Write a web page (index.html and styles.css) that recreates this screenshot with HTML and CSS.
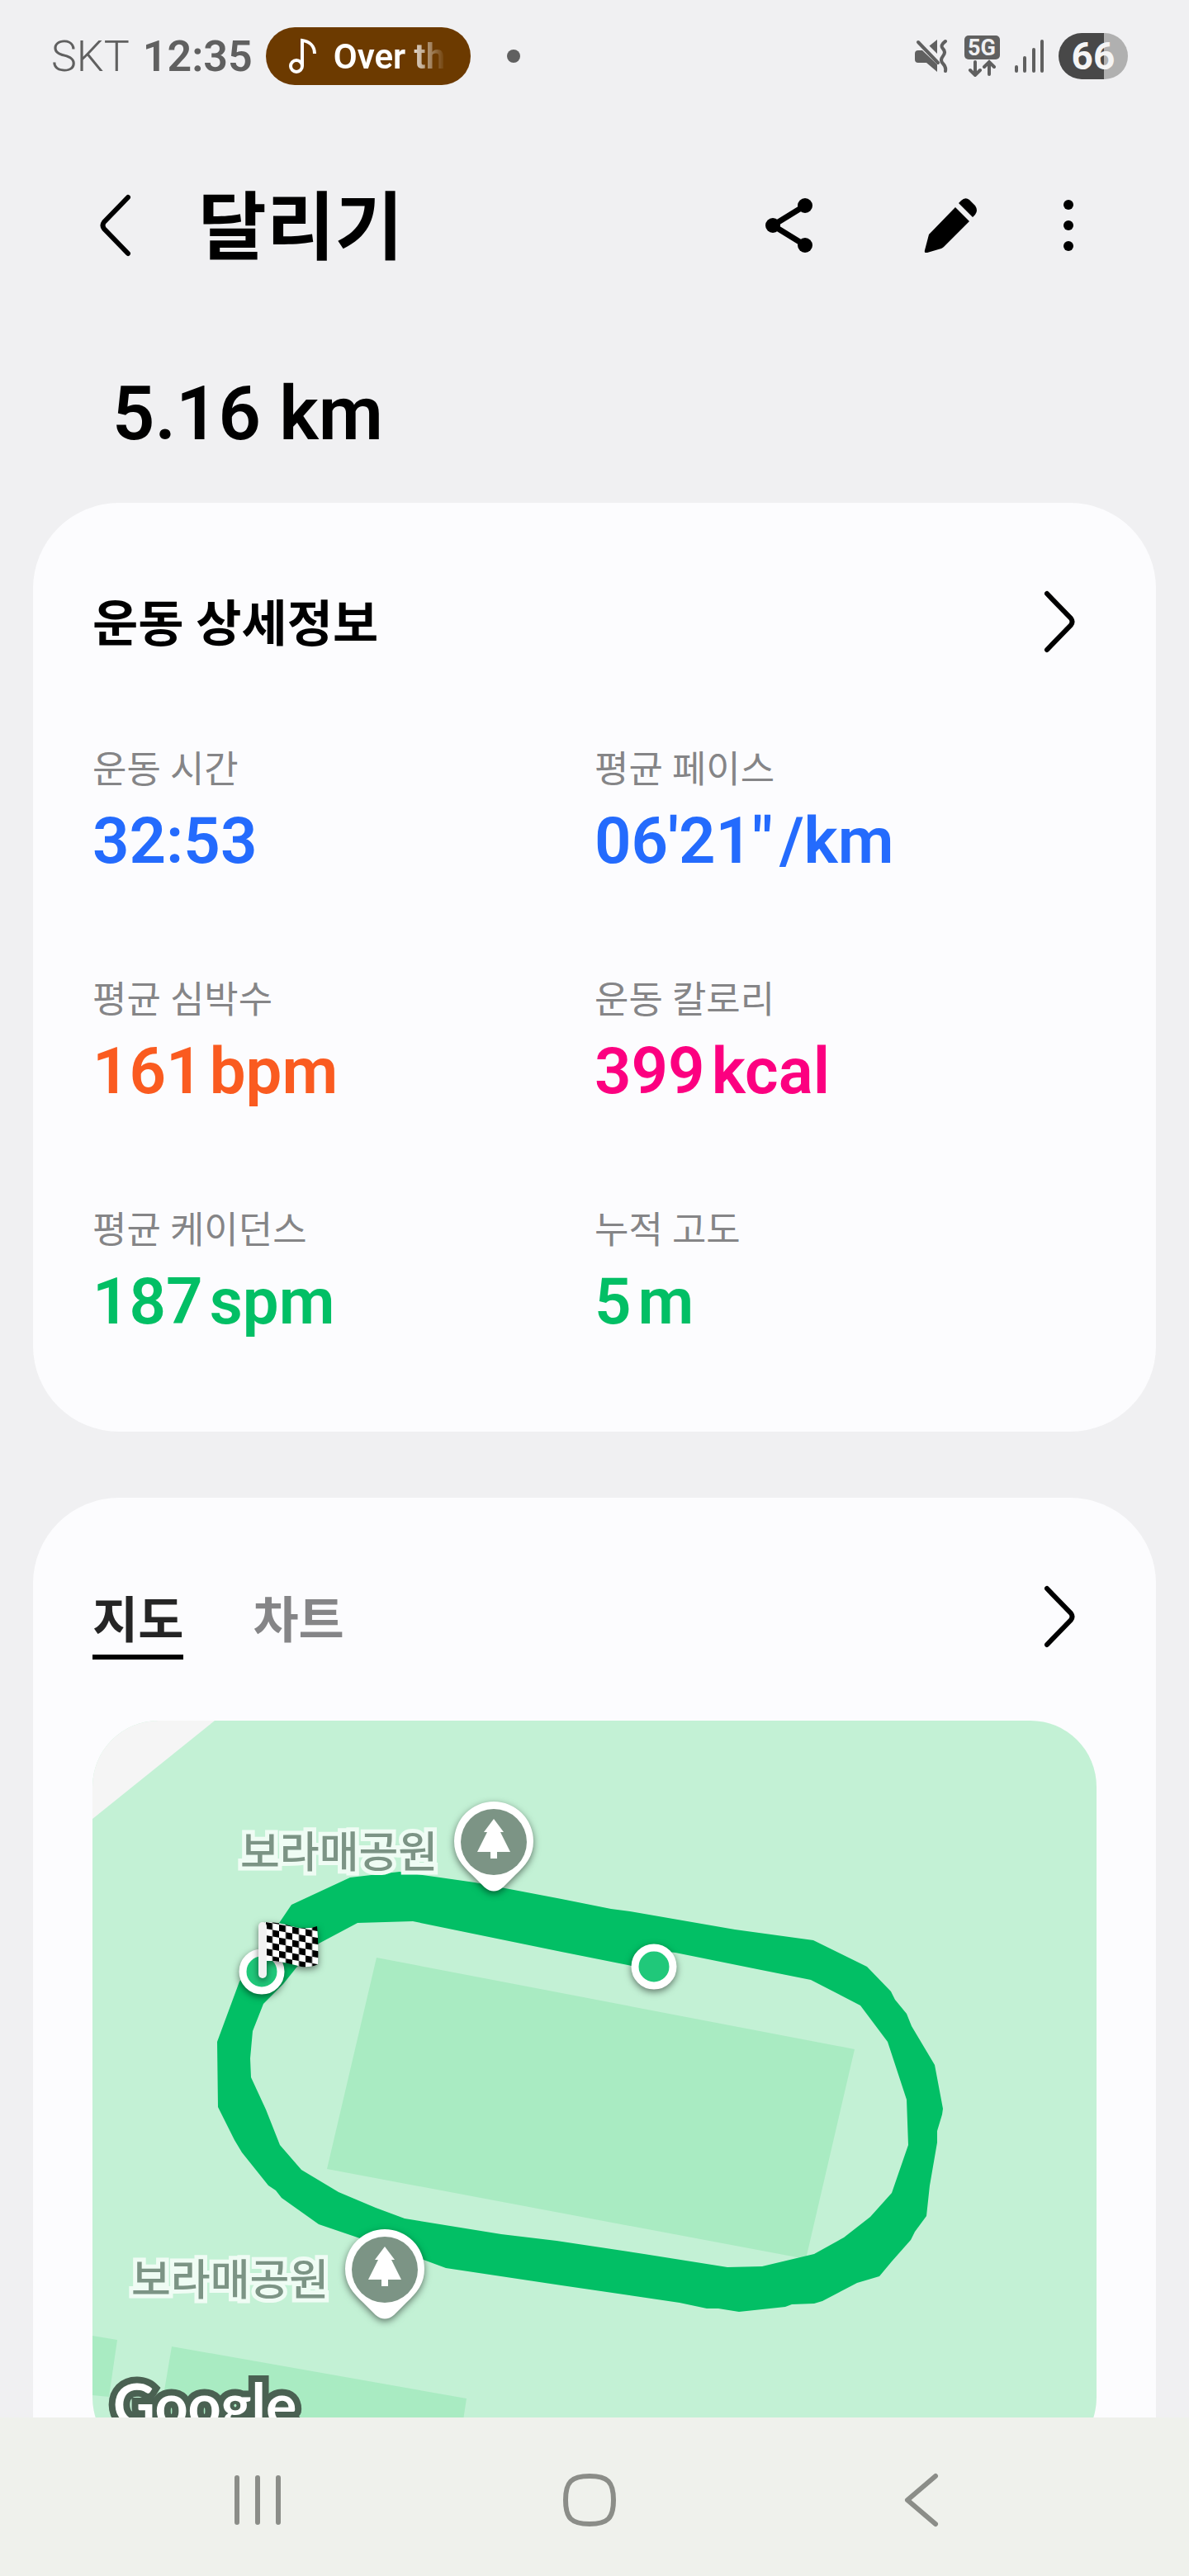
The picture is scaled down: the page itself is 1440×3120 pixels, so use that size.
FILE: index.html
```html
<!DOCTYPE html>
<html lang="ko">

    <head>
        <meta charset="UTF-8">
        <meta name="viewport" content="width=device-width, initial-scale=1.0">
        <title>달리기</title>
        <link rel="stylesheet" href="styles.css">
    </head>

    <body>
        <div class="status-bar">
            <div class="status-left">
                <span class="carrier">SKT</span>
                <span class="clock">12:35</span>
                <button type="button" class="now-playing">
                    <svg class="note-icon" viewBox="0 0 34 44" aria-hidden="true">
                        <circle cx="9" cy="34" r="7" />
                        <path d="M16 34V3c8 1 15 6 15 16" />
                    </svg>
                    <span class="song">Over th</span>
                </button>
                <span class="status-dot"></span>
            </div>
            <div class="status-right">
                <svg class="mute-icon" viewBox="0 0 40 42" aria-hidden="true">
                    <path class="fill" d="M4 14h5l18 17v9L14 29H4q-4 0-4-4v-7q0-4 4-4zM17 9l10-8v20z" />
                    <path class="cut" d="M8 2l24 24" />
                    <path class="line" d="M4 4l24 25" />
                    <path class="line" d="M37 3q-7 5-3 9t0 9 0 9 3 9" />
                </svg>
                <svg class="network-icon" viewBox="0 0 44 50" aria-hidden="true">
                    <rect class="fill" width="43" height="29" rx="5" />
                    <text x="21" y="24">5G</text>
                    <path class="line" d="M13 32v15M7 42l6 6 6-6M30 47V33M24 38l6-6 6 6" />
                </svg>
                <svg class="signal-icon" viewBox="0 0 38 42" aria-hidden="true">
                    <path class="line" d="M3 34v5M13 23v16M24 13v26M34 3v36" />
                </svg>
                <span class="battery">66</span>
            </div>
        </div>

        <header class="app-bar">
            <button type="button" class="icon-button" aria-label="뒤로">
                <svg class="chevron" viewBox="0 0 40 76" aria-hidden="true">
                    <path d="M35 4L6 34q-3 4 0 8L35 72" />
                </svg>
            </button>
            <h1>달리기</h1>
            <div class="actions">
                <button type="button" class="icon-button" aria-label="공유">
                    <svg class="share-icon" viewBox="0 0 60 68" aria-hidden="true">
                        <path d="M49 10L10 34l39 24" />
                        <circle cx="49" cy="10" r="9" />
                        <circle cx="10" cy="34" r="9" />
                        <circle cx="49" cy="58" r="9" />
                    </svg>
                </button>
                <button type="button" class="icon-button" aria-label="편집">
                    <svg class="edit-icon" viewBox="0 0 66 66" aria-hidden="true">
                        <path d="M38 11L55 28 24 59q-1 1-3 2L4 66q-4 1-3-3L6 44zM42 6l3-3q5-5 10-1l7 7q4 6 0 11l-3 3z" />
                    </svg>
                </button>
                <button type="button" class="icon-button menu-button" aria-label="더보기">
                    <svg class="menu-icon" viewBox="0 0 12 64" aria-hidden="true">
                        <circle cx="6" cy="7" r="6" />
                        <circle cx="6" cy="32" r="6" />
                        <circle cx="6" cy="57" r="6" />
                    </svg>
                </button>
            </div>
        </header>

        <main>
            <p class="distance">5.16 km</p>

            <section class="card">
                <div class="card-head">
                    <h2>운동 상세정보</h2>
                    <button type="button" class="icon-button" aria-label="운동 상세정보 열기">
                        <svg class="chevron" viewBox="0 0 40 76" aria-hidden="true">
                            <path d="M4 4l29 30q3 4 0 8L4 72" />
                        </svg>
                    </button>
                </div>
                <dl class="stats">
                    <div class="stat blue">
                        <dt>운동 시간</dt>
                        <dd>32:53</dd>
                    </div>
                    <div class="stat blue">
                        <dt>평균 페이스</dt>
                        <dd>06'21"<span class="unit">/km</span></dd>
                    </div>
                    <div class="stat orange">
                        <dt>평균 심박수</dt>
                        <dd>161<span class="unit">bpm</span></dd>
                    </div>
                    <div class="stat pink">
                        <dt>운동 칼로리</dt>
                        <dd>399<span class="unit">kcal</span></dd>
                    </div>
                    <div class="stat green">
                        <dt>평균 케이던스</dt>
                        <dd>187<span class="unit">spm</span></dd>
                    </div>
                    <div class="stat green">
                        <dt>누적 고도</dt>
                        <dd>5<span class="unit">m</span></dd>
                    </div>
                </dl>
            </section>

            <section class="card">
                <div class="card-head">
                    <div class="tabs" role="tablist">
                        <button type="button" class="tab active" role="tab" aria-selected="true">지도</button>
                        <button type="button" class="tab" role="tab" aria-selected="false">차트</button>
                    </div>
                    <button type="button" class="icon-button" aria-label="지도 열기">
                        <svg class="chevron" viewBox="0 0 40 76" aria-hidden="true">
                            <path d="M4 4l29 30q3 4 0 8L4 72" />
                        </svg>
                    </button>
                </div>
                <svg class="map" viewBox="112 2084 1216 900" role="img" aria-label="달리기 경로 지도">
                    <defs>
                        <pattern id="checker" width="16" height="16" patternUnits="userSpaceOnUse" patternTransform="translate(322 2328) skewY(10)">
                            <rect width="16" height="16" fill="#fff" />
                            <path d="M0 0h8v8H0zM8 8h8v8H8z" />
                        </pattern>
                        <g id="park-pin">
                            <path fill="#fff" d="M0-49a48 48 0 0 1 48 48c0 18-9 29-22 41L11 55q-11 9-22 0l-15-15C-39 28-48 17-48-1A48 48 0 0 1 0-49z" />
                            <circle r="40" fill="#7c9485" />
                            <path fill="#fff" d="M0-28l12 16H8l12 24H4v8h-8v-8h-16L-8-12h-4z" />
                        </g>
                    </defs>

                    <!-- ground -->
                    <rect x="112" y="2084" width="1216" height="900" fill="#c3f1d5" />
                    <path fill="#f5f5f5" d="M112 2084h148L112 2203z" />
                    <path fill="#a9ebc2" d="M456 2371l579 111-59 254-580-109zM112 2829l30 5-10 69-20-2zM208 2842l357 63-12 79H184z" />

                    <!-- route -->
                    <path fill="#02bf65" fill-rule="evenodd" d="M263 2473L290 2400 353 2307 424 2274 484 2267 526 2273 575 2280 680 2300 740 2312 763 2315 890 2337 985 2350 1050 2382 1079 2412 1084 2422 1098 2439 1104 2454 1132 2501 1142 2554 1141 2561 1135 2581 1135 2595 1126 2647 1122 2684 1108 2703 1103 2713 1080 2739 1065 2757 1038 2765 996 2787 986 2790 959 2791 951 2794 895 2800 870 2796 856 2796 823 2789 680 2768 540 2747 513 2737 433 2710 386 2694 341 2662 334 2653 325 2647 293 2607 284 2592 264 2552z
                        M319 2427L306 2460 303 2493 304 2516 322 2555 339 2598 365 2628 410 2655 455 2674 490 2687 607 2706 674 2714 780 2730 881 2746 923 2745 986 2730 1022 2710 1054 2685 1080 2656 1100 2598 1098 2543 1075 2473 1042 2429 982 2398 917 2385 818 2365 790 2362 780 2384 680 2364 500 2327 433 2329 386 2354 359 2383 343 2403z" />

                    <g class="stop">
                        <circle cx="792" cy="2382" r="23" />
                        <circle cx="317" cy="2388" r="23" />
                    </g>
                    <g class="flag">
                        <path fill="url(#checker)" d="M321 2328q16 0 32 5 18 5 31 0 2 24 1 46-8 4-20 3-18-5-32-7h-12z" />
                        <path class="pole" d="M318 2333v58" />
                    </g>

                    <use class="pin" href="#park-pin" x="598" y="2231" />
                    <use class="pin" href="#park-pin" x="466" y="2749" />
                    <text class="place" x="291" y="2262">보라매공원</text>
                    <text class="place" x="159" y="2780">보라매공원</text>
                    <text class="provider" x="137" y="2938">Google</text>
                </svg>
            </section>
        </main>

        <nav class="nav-bar">
            <button type="button" class="nav-button" aria-label="최근 앱">
                <svg viewBox="0 0 68 68" aria-hidden="true">
                    <path d="M9 7v54M34 7v54M59 7v54" />
                </svg>
            </button>
            <button type="button" class="nav-button" aria-label="홈">
                <svg viewBox="0 0 68 68" aria-hidden="true">
                    <path d="M34 5c22 0 29 7 29 29s-7 29-29 29S5 56 5 34 12 5 34 5z" />
                </svg>
            </button>
            <button type="button" class="nav-button" aria-label="이전">
                <svg viewBox="0 0 68 68" aria-hidden="true">
                    <path d="M51 5L17 34l34 29" />
                </svg>
            </button>
        </nav>
    </body>

</html>
```
FILE: styles.css
```css
* {
    box-sizing: border-box;
}

body {
    margin: 0;
    height: 100vh;
    display: flex;
    flex-direction: column;
    background-color: #f0f0f2;
    color: #000;
    font-family: Roboto, "Noto Sans CJK KR", sans-serif;
}

h1,
h2,
p,
dl,
dd {
    margin: 0;
}

button {
    padding: 0;
    border: none;
    background: none;
    color: inherit;
    font-family: inherit;
    cursor: pointer;
}

svg {
    display: block;
}

/* status bar */
.status-bar {
    flex: none;
    display: flex;
    justify-content: space-between;
    align-items: center;
    height: 136px;
    padding: 0 74px 0 62px;
    color: #606060;
    font-size: 52px;
}

.status-left,
.status-right {
    display: flex;
    align-items: center;
}

.carrier {
    margin-right: 16px;
    font-weight: 300;
}

.clock {
    margin-right: 16px;
    font-weight: 600;
}

.now-playing {
    display: flex;
    align-items: center;
    gap: 20px;
    height: 70px;
    padding: 0 28px;
    border-radius: 35px;
    background-color: #6c3a00;
    color: #fff;
}

.note-icon {
    width: 34px;
    height: 44px;
    fill: none;
    stroke: #fff;
    stroke-width: 4;
}

.song {
    width: 138px;
    overflow: hidden;
    white-space: nowrap;
    text-align: left;
    font-size: 42px;
    font-weight: 600;
    -webkit-mask-image: linear-gradient(to right, #000 88px, transparent 136px);
    mask-image: linear-gradient(to right, #000 88px, transparent 136px);
}

.status-dot {
    width: 16px;
    height: 16px;
    margin-left: 44px;
    border-radius: 50%;
    background-color: #606060;
}

.status-right {
    gap: 16px;
}

.status-right .fill {
    fill: #606060;
}

.status-right .line,
.status-right .cut {
    fill: none;
    stroke: #606060;
    stroke-width: 4;
    stroke-linecap: round;
}

.status-right .cut {
    stroke: #f0f0f2;
}

.mute-icon {
    width: 40px;
    height: 42px;
    margin-right: 4px;
}

.network-icon {
    width: 44px;
    height: 50px;
}

.network-icon text {
    fill: #f0f0f2;
    font-size: 27px;
    font-weight: 700;
    text-anchor: middle;
}

.signal-icon {
    width: 38px;
    height: 42px;
}

.battery {
    width: 84px;
    border-radius: 28px;
    background: linear-gradient(to right, #484848 66%, #b0b0b0 66%);
    color: #f4f4f4;
    font-size: 46px;
    font-weight: 700;
    line-height: 56px;
    text-align: center;
}

/* title bar */
.app-bar {
    flex: none;
    display: flex;
    align-items: center;
    height: 274px;
    padding: 0 102px 0 96px;
}

.app-bar h1 {
    flex: 1;
    margin-left: 56px;
    padding-top: 8px;
    font-size: 90px;
    font-weight: 700;
    line-height: 120px;
}

.actions {
    display: flex;
    gap: 108px;
}

.icon-button {
    flex: none;
    display: flex;
    justify-content: center;
    align-items: center;
    width: 88px;
    height: 100px;
}

.menu-button {
    margin-left: -54px;
}

.chevron {
    width: 40px;
    height: 76px;
    fill: none;
    stroke: #000;
    stroke-width: 6;
    stroke-linecap: round;
}

.share-icon {
    width: 60px;
    height: 68px;
    stroke: #000;
    stroke-width: 7;
}

.share-icon path {
    fill: none;
}

.share-icon circle {
    stroke: none;
}

.edit-icon {
    width: 66px;
    height: 66px;
}

.menu-icon {
    width: 12px;
    height: 64px;
}

/* content */
main {
    flex: 1;
    min-height: 0;
    overflow: hidden;
    padding: 0 40px;
}

.distance {
    padding: 42px 96px 57px;
    font-size: 90px;
    font-weight: 600;
    line-height: 100px;
}

.card {
    margin-bottom: 80px;
    padding: 84px 72px 109px;
    border-radius: 104px;
    background-color: #fcfcfe;
}

.card-head {
    display: flex;
    justify-content: space-between;
    align-items: center;
    height: 120px;
}

.card-head h2 {
    padding-top: 8px;
    font-size: 60px;
    font-weight: 700;
    line-height: 80px;
}

.stats {
    display: grid;
    grid-template-columns: 1fr 1fr;
    row-gap: 113px;
    padding-top: 88px;
}

.stat dt {
    margin-bottom: 6px;
    color: #858587;
    font-size: 45px;
    line-height: 64px;
}

.stat dd {
    font-size: 78px;
    font-weight: 600;
    line-height: 96px;
}

.unit {
    margin-left: 8px;
}

.blue dd {
    color: #246bfd;
}

.orange dd {
    color: #fa5b20;
}

.pink dd {
    color: #fc0080;
}

.green dd {
    color: #02bf65;
}

.tabs {
    display: flex;
    gap: 84px;
}

.tab {
    padding-top: 18px;
    border-bottom: 6px solid transparent;
    color: #858587;
    font-size: 60px;
    font-weight: 700;
    line-height: 80px;
}

.tab.active {
    border-color: #000;
    color: #252525;
}

/* map */
.map {
    width: 100%;
    margin-top: 66px;
    border-radius: 80px;
}

.stop circle {
    fill: #20c87a;
    stroke: #fff;
    stroke-width: 9;
}

.stop,
.flag,
.pin {
    filter: drop-shadow(0 3px 4px rgba(0, 0, 0, 0.5));
}

.pole {
    stroke: #f2f2f2;
    stroke-width: 10;
    stroke-linecap: round;
}

.place {
    fill: #7c9485;
    stroke: #effcf4;
    stroke-width: 10;
    paint-order: stroke;
    font-size: 52px;
    font-weight: 500;
}

.provider {
    fill: #fff;
    stroke: #4a6152;
    stroke-width: 16;
    paint-order: stroke;
    font-family: Lato, sans-serif;
    font-size: 70px;
    font-weight: 700;
}

/* system navigation */
.nav-bar {
    flex: none;
    display: flex;
    justify-content: center;
    align-items: center;
    gap: 302px;
    height: 192px;
    padding: 8px 12px 0 0;
    background-color: #eff1ec;
}

.nav-button {
    width: 100px;
    height: 100px;
    display: flex;
    justify-content: center;
    align-items: center;
}

.nav-button svg {
    width: 68px;
    height: 68px;
    fill: none;
    stroke: #8b8d88;
    stroke-width: 6;
    stroke-linecap: round;
    stroke-linejoin: round;
}
```
